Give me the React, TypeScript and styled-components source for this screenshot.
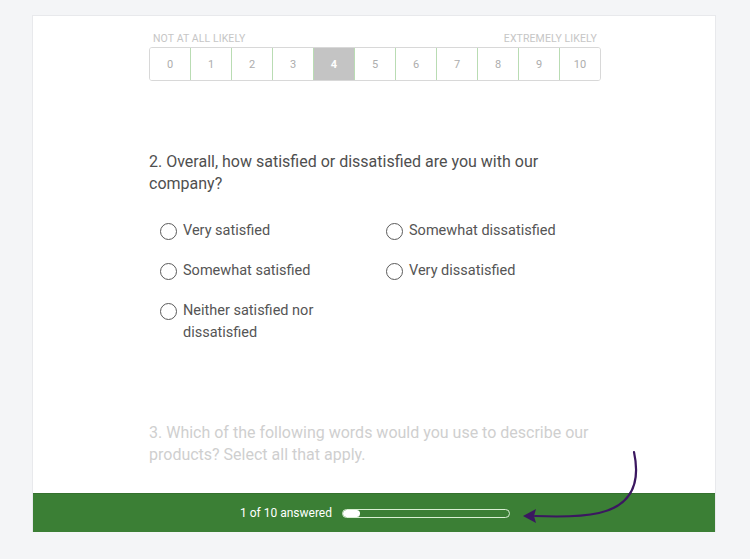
import styled, { createGlobalStyle } from "styled-components";

const GlobalStyle = createGlobalStyle`
  html, body {
    margin: 0;
    padding: 0;
    background: #f4f5f7;
    font-family: Roboto, "Liberation Sans", sans-serif;
  }
`

const scale = [0, 1, 2, 3, 4, 5, 6, 7, 8, 9, 10]
const selected = 4

const optionsLeft = ["Very satisfied", "Somewhat satisfied", "Neither satisfied nor dissatisfied"]
const optionsRight = ["Somewhat dissatisfied", "Very dissatisfied"]

export default function App() {
    return (
        <>
            <GlobalStyle/>
            <Page>
                <Card>
                    <Content>
                        <ScaleLabels>
                            <span>Not at all likely</span>
                            <span>Extremely likely</span>
                        </ScaleLabels>
                        <Scale>
                            {scale.map(n => (
                                <ScaleCell key={n} $active={n === selected}>{n}</ScaleCell>
                            ))}
                        </Scale>

                        <Question>2. Overall, how satisfied or dissatisfied are you with our company?</Question>
                        <Options>
                            <OptionColumn>
                                {optionsLeft.map(o => (
                                    <Option key={o}>
                                        <Radio/>
                                        <OptionText>{o}</OptionText>
                                    </Option>
                                ))}
                            </OptionColumn>
                            <OptionColumn>
                                {optionsRight.map(o => (
                                    <Option key={o}>
                                        <Radio/>
                                        <OptionText>{o}</OptionText>
                                    </Option>
                                ))}
                            </OptionColumn>
                        </Options>

                        <FadedQuestion>3. Which of the following words would you use to describe our products? Select all that apply.</FadedQuestion>
                    </Content>

                    <Footer>
                        <FooterText>1 of 10 answered</FooterText>
                        <Progress>
                            <ProgressFill style={{width: `${(1 / 10) * 100}%`}}/>
                        </Progress>
                    </Footer>

                    <Arrow width="130" height="80" viewBox="0 0 130 80">
                        <path d="M115 2 C 121 30, 116 55, 80 63 C 62 67, 40 67, 16 66"
                              fill="none" stroke="#3b1760" strokeWidth="2.2" strokeLinecap="round"/>
                        <path d="M4 66 L 17 59 L 15 66 L 17 73 Z" fill="#3b1760"/>
                    </Arrow>
                </Card>
            </Page>
        </>
    )
}

const Page = styled.div`
  width: 750px;
  height: 559px;
  padding: 15px 0 0 32px;
  box-sizing: border-box;
`

const Card = styled.div`
  position: relative;
  width: 684px;
  background: #fff;
  border: 1px solid #e8e9ec;
  border-bottom: none;
  box-sizing: border-box;
`

const Content = styled.div`
  padding: 16px 0 27px 116px;
  width: 568px;
`

const ScaleLabels = styled.div`
  display: flex;
  justify-content: space-between;
  width: 452px;
  padding: 0 4px;
  box-sizing: border-box;
  font-size: 10.5px;
  letter-spacing: 0.1px;
  text-transform: uppercase;
  color: #c6c6c6;
  line-height: 13px;
`

const Scale = styled.div`
  display: flex;
  width: 452px;
  height: 34px;
  margin-top: 2px;
  border: 1px solid #d8d8d8;
  border-radius: 3px;
  overflow: hidden;
  box-sizing: border-box;
`

const ScaleCell = styled.div<{ $active: boolean }>`
  flex: 1;
  display: flex;
  align-items: center;
  justify-content: center;
  font-size: 11px;
  color: ${p => p.$active ? '#fff' : '#adadad'};
  background: ${p => p.$active ? '#c4c4c4' : '#fff'};
  font-weight: ${p => p.$active ? 700 : 400};

  &:not(:last-child) {
    border-right: 1px solid #b9dcb3;
  }
`

const Question = styled.div`
  margin-top: 70px;
  width: 420px;
  font-size: 16px;
  line-height: 22px;
  color: #4f4f4f;
`

const Options = styled.div`
  display: flex;
  margin-top: 27px;
  padding-left: 11px;
`

const OptionColumn = styled.div`
  width: 226px;
  display: flex;
  flex-direction: column;
  gap: 20px;
`

const Option = styled.div`
  display: flex;
  align-items: flex-start;
`

const Radio = styled.span`
  flex: none;
  width: 17px;
  height: 17px;
  border: 1.5px solid #5a5a5a;
  border-radius: 50%;
  box-sizing: border-box;
  margin-top: 1px;
  margin-right: 6px;
`

const OptionText = styled.span`
  font-size: 14.5px;
  line-height: 22px;
  margin-top: -2px;
  color: #555;
  width: 150px;
`

const FadedQuestion = styled.div`
  margin-top: 78px;
  width: 452px;
  font-size: 16px;
  line-height: 22px;
  color: #cfcfcf;
`

const Footer = styled.div`
  height: 39px;
  background: #3b7f35;
  border-top: 1px solid #35712f;
  display: flex;
  align-items: center;
  padding-left: 207px;
  box-sizing: border-box;
  gap: 10px;
`

const FooterText = styled.span`
  font-size: 12px;
  color: #fff;
`

const Progress = styled.div`
  width: 168px;
  height: 9px;
  border: 1.5px solid #d9efd4;
  border-radius: 5px;
  box-sizing: border-box;
  overflow: hidden;
`

const ProgressFill = styled.div`
  height: 100%;
  background: #fff;
  border-radius: 4px;
`

const Arrow = styled.svg`
  position: absolute;
  left: 486px;
  top: 434px;
`
